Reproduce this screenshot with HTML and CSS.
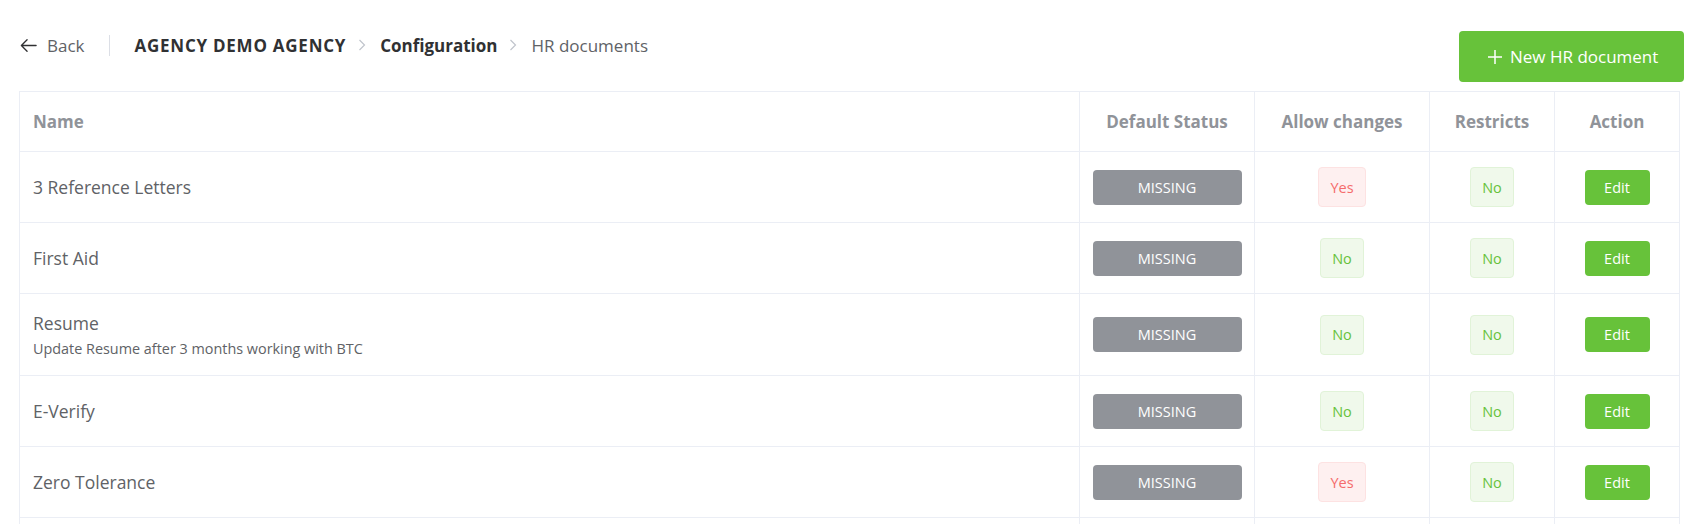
FILE: index.html
```html
<!DOCTYPE html>
<html lang="en">
<head>
<meta charset="utf-8">
<title>HR documents</title>
<link rel="stylesheet" href="styles.css">
</head>
<body>
<div class="page">
  <div class="topbar">
    <nav class="crumbs">
      <a class="back" href="#">
        <svg class="back-icon" viewBox="0 0 20 20" width="19" height="19"><path d="M18 10H2.5M8.5 4l-6 6 6 6" fill="none" stroke="#303133" stroke-width="1.4" stroke-linecap="round" stroke-linejoin="round"/></svg>
        <span>Back</span>
      </a>
      <span class="sep"></span>
      <span class="crumb strong caps">AGENCY DEMO AGENCY</span>
      <svg class="chev" viewBox="0 0 8 12" width="8" height="12"><path d="M1.5 1l5 5-5 5" fill="none" stroke="#c0c4cc" stroke-width="1.2"/></svg>
      <span class="crumb strong">Configuration</span>
      <svg class="chev" viewBox="0 0 8 12" width="8" height="12"><path d="M1.5 1l5 5-5 5" fill="none" stroke="#c0c4cc" stroke-width="1.2"/></svg>
      <span class="crumb current">HR documents</span>
    </nav>
    <button class="btn-new">
      <svg viewBox="0 0 16 16" width="16" height="16"><path d="M8 1v14M1 8h14" fill="none" stroke="#fff" stroke-width="1.5"/></svg>
      <span>New HR document</span>
    </button>
  </div>

  <div class="table">
    <div class="row head">
      <div class="cell name">Name</div>
      <div class="cell">Default Status</div>
      <div class="cell">Allow changes</div>
      <div class="cell">Restricts</div>
      <div class="cell">Action</div>
    </div>
    <div class="row">
      <div class="cell name"><div class="title">3 Reference Letters</div></div>
      <div class="cell"><span class="status">MISSING</span></div>
      <div class="cell"><span class="tag yes">Yes</span></div>
      <div class="cell"><span class="tag no">No</span></div>
      <div class="cell"><button class="btn-edit">Edit</button></div>
    </div>
    <div class="row">
      <div class="cell name"><div class="title">First Aid</div></div>
      <div class="cell"><span class="status">MISSING</span></div>
      <div class="cell"><span class="tag no">No</span></div>
      <div class="cell"><span class="tag no">No</span></div>
      <div class="cell"><button class="btn-edit">Edit</button></div>
    </div>
    <div class="row tall">
      <div class="cell name"><div class="title">Resume</div><div class="desc">Update Resume after 3 months working with BTC</div></div>
      <div class="cell"><span class="status">MISSING</span></div>
      <div class="cell"><span class="tag no">No</span></div>
      <div class="cell"><span class="tag no">No</span></div>
      <div class="cell"><button class="btn-edit">Edit</button></div>
    </div>
    <div class="row">
      <div class="cell name"><div class="title">E-Verify</div></div>
      <div class="cell"><span class="status">MISSING</span></div>
      <div class="cell"><span class="tag no">No</span></div>
      <div class="cell"><span class="tag no">No</span></div>
      <div class="cell"><button class="btn-edit">Edit</button></div>
    </div>
    <div class="row">
      <div class="cell name"><div class="title">Zero Tolerance</div></div>
      <div class="cell"><span class="status">MISSING</span></div>
      <div class="cell"><span class="tag yes">Yes</span></div>
      <div class="cell"><span class="tag no">No</span></div>
      <div class="cell"><button class="btn-edit">Edit</button></div>
    </div>
    <div class="row">
      <div class="cell name"></div>
      <div class="cell"></div>
      <div class="cell"></div>
      <div class="cell"></div>
      <div class="cell"></div>
    </div>
  </div>
</div>
</body>
</html>
```

FILE: styles.css
```css
* { box-sizing: border-box; }
html, body { margin: 0; padding: 0; background: #fff; }
body {
  font-family: "Open Sans", "Noto Sans", "Liberation Sans", sans-serif;
  color: #606266;
  width: 1700px;
  overflow: hidden;
}
.page { padding: 31px 16px 0 19px; }

.topbar {
  display: flex;
  justify-content: space-between;
  align-items: flex-start;
}
.crumbs {
  display: flex;
  align-items: center;
  height: 22px;
  margin-top: 3px;
  font-size: 17px;
}
.back {
  display: flex;
  align-items: center;
  gap: 9px;
  color: #606266;
  text-decoration: none;
}
.sep {
  width: 1px;
  height: 21px;
  background: #dcdfe6;
  margin: 0 25px 0 24px;
}
.crumb.strong { font-weight: 700; color: #303133; }
.crumb.caps { letter-spacing: 0.75px; }
.crumb.current { color: #606266; }
.chev { margin: 0 14px 0 12px; }

.btn-new {
  display: flex;
  align-items: center;
  gap: 7px;
  height: 51px;
  width: 225px;
  padding: 0 0 0 28px;
  border: none;
  border-radius: 4px;
  background: #67c23a;
  color: #fff;
  font-family: inherit;
  font-size: 17px;
  cursor: pointer;
}

.table {
  margin-top: 9px;
  width: 1661px;
  border-top: 1px solid #ebeef5;
  border-left: 1px solid #ebeef5;
}
.row {
  display: grid;
  grid-template-columns: 1060px 175px 175px 125px 125px;
  height: 71px;
  border-bottom: 1px solid #ebeef5;
}
.row.head { height: 60px; }
.row.tall { height: 82px; }
.cell {
  border-right: 1px solid #ebeef5;
  display: flex;
  align-items: center;
  justify-content: center;
}
.cell.name {
  flex-direction: column;
  align-items: flex-start;
  justify-content: center;
  padding-left: 13px;
}
.head .cell {
  font-size: 17px;
  font-weight: 700;
  color: #909399;
}
.title { font-size: 17.5px; color: #606266; }
.desc { font-size: 14.4px; color: #606266; margin-top: 4px; }

.status {
  display: inline-flex;
  align-items: center;
  justify-content: center;
  width: 149px;
  height: 35px;
  border-radius: 4px;
  background: #909399;
  color: #fff;
  font-size: 14.5px;
}
.tag {
  display: inline-flex;
  align-items: center;
  justify-content: center;
  height: 40px;
  padding: 0 11px;
  border-radius: 4px;
  border: 1px solid;
  font-size: 14.5px;
}
.tag.yes { background: #fef0f0; border-color: #fde2e2; color: #f56c6c; }
.tag.no { background: #f0f9eb; border-color: #e1f3d8; color: #67c23a; }

.btn-edit {
  width: 65px;
  height: 35px;
  border: none;
  border-radius: 4px;
  background: #67c23a;
  color: #fff;
  font-family: inherit;
  font-size: 14.5px;
  cursor: pointer;
}
```
